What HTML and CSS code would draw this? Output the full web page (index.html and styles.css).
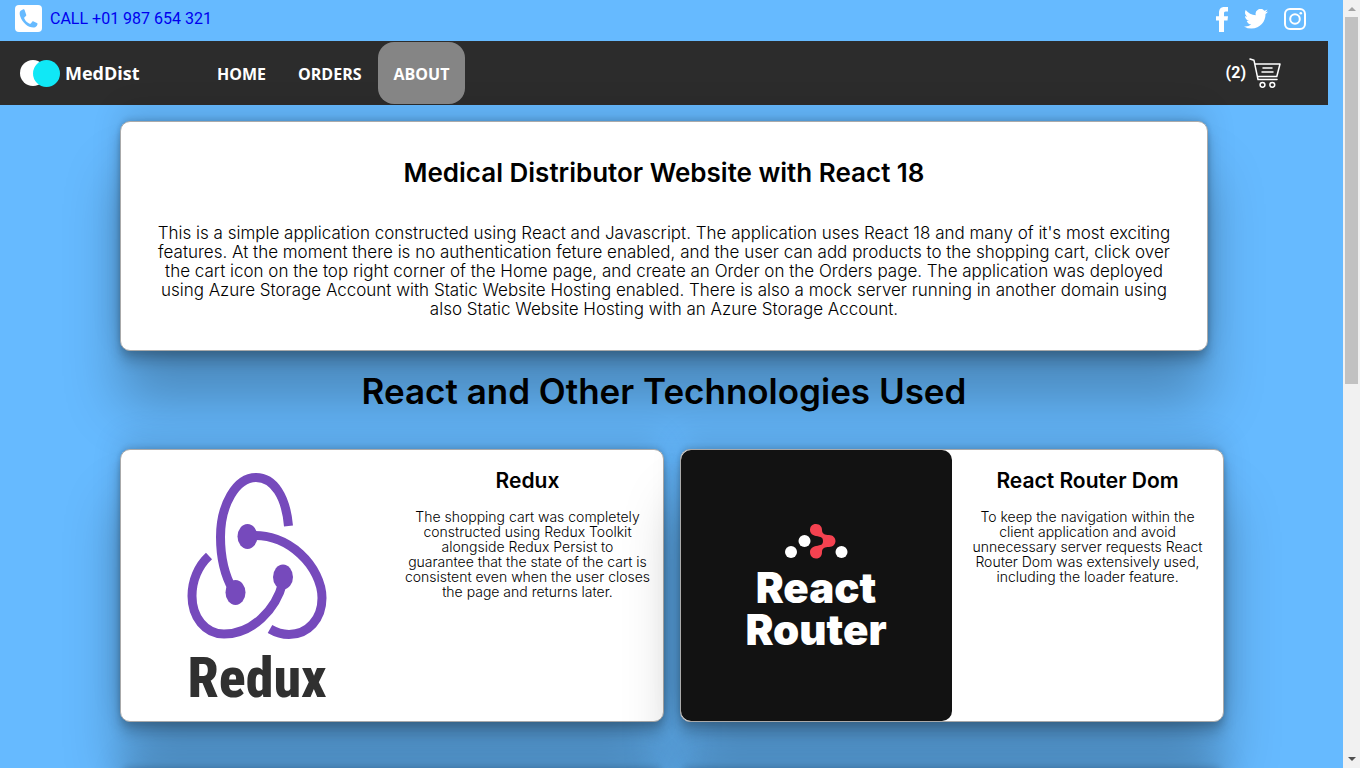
FILE: index.html
```html
<!DOCTYPE html>
<html lang="en">
<head>
<meta charset="utf-8">
<title>MedDist - About</title>
<link rel="stylesheet" href="styles.css">
</head>
<body>
<header class="topbar">
  <a class="phone" href="tel:+01987654321">
    <svg class="phone-icon" viewBox="0 0 27 27" aria-hidden="true"><rect width="27" height="27" rx="4" fill="#fff"/><path fill="#66baff" d="M8.3 4.3 5.6 5.8C4.4 6.7 4.4 9 5.3 11.6c1 3 2.900 5.700 5.200 7.700 2.500 2.200 5.700 3.500 8.600 3.300 1.600-.1 2.800-1.400 3.300-3 .3-.9.1-1.300-.5-1.600l-3.300-1.500c-.6-.3-1-.2-1.400.3l-1.400 1.700c-.3.400-.7.4-1.200.2-2.200-1-4.300-3-5.300-5.300-.2-.5-.1-.8.200-1.100l1.400-1.300c.4-.4.5-.7.300-1.300L9.500 4.700c-.2-.5-.7-.7-1.200-.4z"/></svg>
    <span>CALL +01 987 654 321</span>
  </a>
  <div class="social">
    <a href="#facebook" aria-label="Facebook"><svg class="fb" viewBox="0 0 12 25"><path fill="#fff" d="M3 25V13.500H0V9.200h3V6C3 2 4.800 0 8.300 0H12v4.500H9.700C8.300 4.500 8 5.200 8 6.500v2.700h4l-.5 4.300H8V25z"/></svg></a>
    <a href="#twitter" aria-label="Twitter"><svg class="tw" viewBox="0 0 24 20"><path fill="#fff" d="M24 2.400c-.9.400-1.800.7-2.800.8 1-.6 1.800-1.600 2.200-2.700-1 .6-2 1-3.100 1.200A4.900 4.900 0 0 0 11.800 6.200C7.700 6 4.100 4 1.700 1 .4 3.200 1 6.100 3.200 7.600c-.8 0-1.600-.2-2.200-.6 0 2.300 1.600 4.400 3.900 4.900-.7.200-1.500.2-2.200.1.600 2 2.400 3.400 4.600 3.400A9.900 9.900 0 0 1 0 17.400 14 14 0 0 0 7.500 19.600c9.100 0 14.300-7.700 14-14.600 1-.7 1.800-1.600 2.500-2.600z"/></svg></a>
    <a href="#instagram" aria-label="Instagram"><svg class="ig" viewBox="0 0 22 22" fill="none" stroke="#fff" stroke-width="2"><rect x="1" y="1" width="20" height="20" rx="5"/><circle cx="11" cy="11" r="4.800"/><circle cx="16.800" cy="5.200" r="1.300" fill="#fff" stroke="none"/></svg></a>
  </div>
</header>
<nav class="navbar">
  <a class="brand" href="#home">
    <svg class="brand-icon" viewBox="0 0 40 27" aria-hidden="true"><circle cx="13" cy="13" r="13" fill="#fff"/><circle cx="26.500" cy="13.500" r="13.500" fill="#10e8f6"/></svg>
    <span>MedDist</span>
  </a>
  <div class="links">
    <a href="#home">HOME</a>
    <a href="#orders">ORDERS</a>
    <a class="active" href="#about">ABOUT</a>
  </div>
  <a class="cart" href="#cart" aria-label="Shopping cart, 2 items">
    <span>(2)</span>
    <svg class="cart-icon" viewBox="0 0 32 30" fill="none" stroke="#fff" stroke-width="1.500" stroke-linecap="round" stroke-linejoin="round" aria-hidden="true"><path d="M1 1l4 1.300L9 21.500h19M6.200 6H31l-3.200 12.500H8.500M14 10h9M13 14h11"/><circle cx="13.500" cy="26.800" r="2.400"/><circle cx="23.300" cy="26.800" r="2.400"/></svg>
  </a>
</nav>
<main class="content">
  <section class="about">
    <h2>Medical Distributor Website with React 18</h2>
    <p>This is a simple application constructed using React and Javascript. The application uses React 18 and many of it's most exciting<br>
    features. At the moment there is no authentication feture enabled, and the user can add products to the shopping cart, click over<br>
    the cart icon on the top right corner of the Home page, and create an Order on the Orders page. The application was deployed<br>
    using Azure Storage Account with Static Website Hosting enabled. There is also a mock server running in another domain using<br>
    also Static Website Hosting with an Azure Storage Account.</p>
  </section>
  <h1>React and Other Technologies Used</h1>
  <div class="grid">
    <article class="card">
      <svg class="logo" viewBox="0 0 271 271" role="img" aria-label="Redux logo">
        <g fill="none" stroke="#764abc" stroke-width="9">
          <path d="M167.500 76C165 47 153 27.500 135 27.500C115 27.500 99.500 55 99.500 87C99.500 106 104 126 112 140"/>
          <path d="M126 86C168 81 201 118 201 148C201 169 187 184.500 168 184.500C162 184.500 155 182.500 149 179"/>
          <path d="M88 106C77 116 71 131 71 146C71 167 84 184 103 184C131 184 155 160 162 132"/>
        </g>
        <g fill="#764abc"><ellipse cx="126.500" cy="86.500" rx="10" ry="12.500"/><ellipse cx="114.500" cy="142.500" rx="10" ry="12.500"/><ellipse cx="162" cy="127" rx="10" ry="12.500"/></g>
        <text class="redux-word" x="136" y="247">Redux</text>
      </svg>
      <div class="card-text">
        <h3>Redux</h3>
        <p>The shopping cart was completely<br>constructed using Redux Toolkit<br>alongside Redux Persist to<br>guarantee that the state of the cart is<br>consistent even when the user closes<br>the page and returns later.</p>
      </div>
    </article>
    <article class="card">
      <svg class="logo logo-dark" viewBox="0 0 271 271" role="img" aria-label="React Router logo">
        <g fill="#fff"><circle cx="110" cy="102" r="6"/><circle cx="123.500" cy="91" r="6"/><circle cx="160.500" cy="102" r="6"/></g>
        <path fill="#f44250" d="M135 74c4 0 6 3 6 6 0 4 3 5 7 5 4 0 6.500 3 6.500 6s-2.500 6-6.500 6c-4 0-7 1-7 5 0 4-2 6.500-6 6.500s-6-3-6-6.500 3-5.500 6-6c5-1 7-1 7-5s-2-4-7-5c-3-.5-6-2.500-6-6s2-6 6-6z"/>
        <text class="router-word" x="135" y="153">React</text>
        <text class="router-word" x="135" y="195">Router</text>
      </svg>
      <div class="card-text">
        <h3>React Router Dom</h3>
        <p>To keep the navigation within the<br>client application and avoid<br>unnecessary server requests React<br>Router Dom was extensively used,<br>including the loader feature.</p>
      </div>
    </article>
    <article class="card next"></article>
    <article class="card next"></article>
  </div>
</main>
<div class="scrollbar" aria-hidden="true">
  <svg viewBox="0 0 17 17"><path d="M5 11l4-4 4 4z" fill="#a3a3a3"/></svg>
  <div class="track"><div class="thumb"></div></div>
  <svg viewBox="0 0 17 17"><path d="M5 6h8l-4 4z" fill="#505050"/></svg>
</div>
</body>
</html>
```
FILE: styles.css
```css
* { box-sizing: border-box; }
html { height: 100%; overflow: hidden; }
body {
  margin: 0;
  height: 100%;
  overflow: hidden;
  padding-right: 17px;
  background: #66baff;
  color: #000;
  font-family: Inter, "Open Sans", sans-serif;
}
a { text-decoration: none; }
svg { display: block; flex: none; }

.topbar {
  display: flex;
  justify-content: space-between;
  align-items: flex-start;
  height: 41px;
  padding: 5px 37px 0 15px;
}
.phone { display: flex; align-items: center; gap: 8px; color: #0000ee; font: 16px/27px Roboto, sans-serif; }
.phone-icon { width: 27px; height: 27px; }
.social { display: flex; align-items: center; gap: 16px; height: 28px; }
.fb { width: 12px; height: 25px; }
.tw { width: 24px; height: 20px; }
.ig { width: 22px; height: 22px; }

.navbar {
  display: flex;
  align-items: center;
  height: 64px;
  margin-right: 15px;
  padding: 0 47px 0 20px;
  background: #2c2c2c;
  font-family: "Open Sans", "Noto Sans", sans-serif;
  font-weight: 700;
}
.navbar a { color: #fff; }
.brand { display: flex; align-items: center; gap: 5px; width: 181px; font-size: 18px; }
.brand-icon { width: 40px; height: 27px; }
.links { display: flex; font-size: 16px; }
.links a { padding: 2px 16px 0; line-height: 60px; border-radius: 16px; }
.links .active { background: #858585; }
.cart { display: flex; align-items: center; gap: 3px; margin-left: auto; font: 700 16px/30px Roboto, sans-serif; }
.cart-icon { width: 32px; height: 30px; }

.content { margin: 16px 119px 0 120px; text-align: center; }
.about, .card {
  border: 1px solid #aaa;
  border-radius: 10px;
  background: #fff;
  box-shadow: rgba(0, 0, 0, 0.25) 0 54px 55px, rgba(0, 0, 0, 0.12) 0 -12px 30px, rgba(0, 0, 0, 0.12) 0 4px 6px, rgba(0, 0, 0, 0.17) 0 12px 13px, rgba(0, 0, 0, 0.09) 0 -3px 5px;
}
.about { margin-right: 16px; padding: 36px 16px 31px; }
.about h2 { margin: 0 0 36px; font-size: 26px; line-height: 30px; font-weight: 600; }
.about p { margin: 0; font-size: 17px; line-height: 19px; font-weight: 300; white-space: nowrap; }
h1 { margin: 20px 16px 38px 0; font-size: 35px; line-height: 40px; font-weight: 600; }
.grid { display: grid; grid-template-columns: 1fr 1fr; gap: 46px 16px; }
.card { display: flex; align-items: flex-start; }
.next { height: 273px; }
.logo { width: 50%; border-radius: 10px; }
.logo-dark { background: #121212; }
.card-text { flex: 1; padding: 19px 0 0; }
.card h3 { margin: 0 0 16px; font-size: 21px; line-height: 24px; font-weight: 600; }
.card p { margin: 0; font-size: 14px; line-height: 15px; font-weight: 300; white-space: nowrap; }
.redux-word { font: 800 56px "Roboto Condensed", Roboto, sans-serif; fill: #303030; text-anchor: middle; }
.router-word { font: 900 42px Inter, sans-serif; fill: #fff; text-anchor: middle; }

.scrollbar {
  position: fixed;
  inset: 0 0 0 auto;
  display: flex;
  flex-direction: column;
  width: 17px;
  background: #f1f1f1;
}
.scrollbar svg { width: 17px; height: 17px; }
.track { flex: 1; padding: 0 2px; }
.thumb { height: 50%; background: #c1c1c1; }
```
